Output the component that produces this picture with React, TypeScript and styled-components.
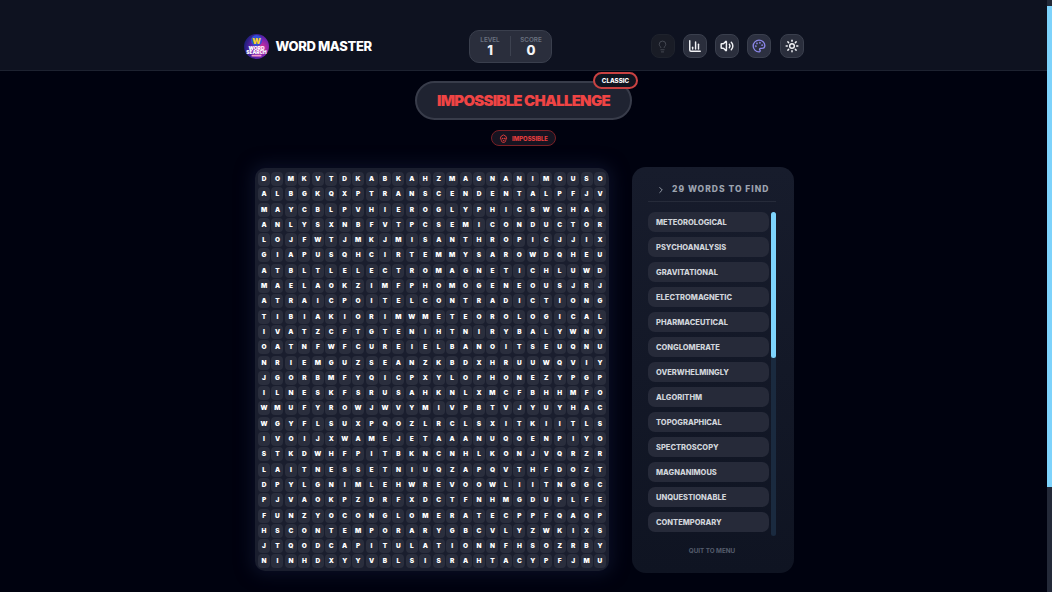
import React from "react";
import styled, { createGlobalStyle } from "styled-components";
import { ChartColumn, ChevronRight, Lightbulb, Palette, Skull, Sun, Volume2 } from "lucide-react";

const ROWS = [
  "DOMKVTDKABKAHZMAGNANIMOUSO",
  "ALBGKQXPTRANSCENDENTALPFJV",
  "MAYCBLPVHIEROGLYPHICSWCHAA",
  "ANLYSXNBFVTPCSEMICONDUCTOR",
  "LOJFWTJMKJMISANTHROPICJJIX",
  "GIAPUSQHCIRTEMMYSAROWDQHEU",
  "ATBLTLELECTROMAGNETICHLUWD",
  "MAELAOKZIMFPHOMOGENEOUSJRJ",
  "ATRAICPOITELCONTRADICTIONG",
  "TIBIAKIORIMWMETEOROLOGICAL",
  "IVATZCFTGTENIHTNIRYBALYWNV",
  "OATNFWFCUREIELBANOITSEUQNU",
  "NRIEMGUZSEANZKBDXHRUUWQVIY",
  "JGORBMFYQICPXYLOPHONEZYPGP",
  "ILNESKFSRUSAHKNLXMCFBHHMFO",
  "WMUFYROWJWVYMIVPBTVJYUYHAC",
  "WGYFLSUXPQOZLRCLSXITKIITLS",
  "IVOIJXWAMEJETAAANUQOENPIYO",
  "STKDWHFPITBKNCNHLKONJVQRZR",
  "LAITNESSETNIUQZAPQVTHFDOZT",
  "DPYLGNIMLEHWREVOOWLIITNGGC",
  "PJVAOKPZDRFXDCTFNHMGDUPLFE",
  "FUNZYOCONGLOMERATECPPFQAQP",
  "HSCONTEMPORARYGBCVLYZWKIXS",
  "JTQODCAPITULATIONNFHSOZRBY",
  "NINHDXYYVBLSISRAHTACYPFJMU",
];

const WORDS = [
  "METEOROLOGICAL",
  "PSYCHOANALYSIS",
  "GRAVITATIONAL",
  "ELECTROMAGNETIC",
  "PHARMACEUTICAL",
  "CONGLOMERATE",
  "OVERWHELMINGLY",
  "ALGORITHM",
  "TOPOGRAPHICAL",
  "SPECTROSCOPY",
  "MAGNANIMOUS",
  "UNQUESTIONABLE",
  "CONTEMPORARY",
  "TRANSCENDENTAL",
  "HIEROGLYPHICS",
  "SEMICONDUCTOR",
  "MISANTHROPIC",
  "HOMOGENEOUS",
  "CONTRADICTION",
  "XYLOPHONE",
  "CAPITULATION",
  "ANTHROPOLOGY",
  "METAMORPHOSIS",
  "LABYRINTHINE",
  "QUINTESSENTIAL",
  "PHOTOSYNTHESIS",
  "ARCHAEOLOGICAL",
  "PSEUDONYMOUS",
  "EXTRAORDINARY",
];

export default function App() {
  return (
    <Page>
      <GlobalStyle />
      <Header>
        <HeaderInner>
          <Brand>
            <Logo />
            <BrandName>WORD MASTER</BrandName>
          </Brand>
          <Stats>
            <Stat>
              <StatLabel>LEVEL</StatLabel>
              <StatValue>1</StatValue>
            </Stat>
            <StatDivider />
            <Stat>
              <StatLabel>SCORE</StatLabel>
              <StatValue>0</StatValue>
            </Stat>
          </Stats>
          <Tools>
            <ToolButton $muted>
              <Lightbulb size={13} strokeWidth={1.6} />
            </ToolButton>
            <ToolButton>
              <ChartColumn size={14} strokeWidth={2.5} />
            </ToolButton>
            <ToolButton>
              <Volume2 size={14} strokeWidth={2.5} />
            </ToolButton>
            <ToolButton $accent>
              <Palette size={14} strokeWidth={2.3} />
            </ToolButton>
            <ToolButton>
              <Sun size={14} strokeWidth={2.5} />
            </ToolButton>
          </Tools>
        </HeaderInner>
      </Header>

      <Main>
        <TitlePill>
          <Title>IMPOSSIBLE CHALLENGE</Title>
          <ModeBadge>CLASSIC</ModeBadge>
        </TitlePill>
        <Difficulty>
          <Skull size={9} strokeWidth={2.4} />
          IMPOSSIBLE
        </Difficulty>

        <Game>
          <Board>
            {ROWS.map((row, r) =>
              row.split("").map((letter, c) => <Cell key={`${r}-${c}`}>{letter}</Cell>)
            )}
          </Board>

          <Sidebar>
            <SidebarHead>
              <ChevronRight size={10} strokeWidth={2.2} />
              <SidebarTitle>29 WORDS TO FIND</SidebarTitle>
            </SidebarHead>
            <WordPane>
              <WordList>
                {WORDS.map((word) => (
                  <Word key={word}>{word}</Word>
                ))}
              </WordList>
              <ListTrack>
                <ListThumb />
              </ListTrack>
            </WordPane>
            <QuitButton>QUIT TO MENU</QuitButton>
          </Sidebar>
        </Game>
      </Main>

      <PageTrack>
        <PageThumb />
      </PageTrack>
    </Page>
  );
}

function Logo() {
  return (
    <LogoSvg viewBox="0 0 50 50">
      <defs>
        <radialGradient id="logoBg" cx="0.7" cy="0.55" r="0.7">
          <stop offset="0" stopColor="#e0309c" />
          <stop offset="0.55" stopColor="#6a22b0" />
          <stop offset="1" stopColor="#1c1f78" />
        </radialGradient>
      </defs>
      <circle cx="25" cy="25" r="25" fill="url(#logoBg)" />
      <circle cx="25" cy="13" r="11" fill="#2f4fd8" />
      <LogoText x="25" y="19" fontSize="16" fill="#f8cf2c">W</LogoText>
      <LogoText x="25" y="31" fontSize="10" fill="#fff">WORD</LogoText>
      <LogoText x="25" y="39" fontSize="9.6" fill="#fff">SEARCH</LogoText>
      <rect x="15" y="41.5" width="20" height="3.5" rx="1.75" fill="#f59ac8" />
    </LogoSvg>
  );
}

const GlobalStyle = createGlobalStyle`
  html {
    background: #00020f;
  }

  body {
    margin: 0;
    background: #00020f;
    font-family: Inter, "Liberation Sans", sans-serif;
  }
`;

const Page = styled.div`
  position: relative;
  height: 592px;
  padding-right: 5px;
  overflow: hidden;
`;

const PageTrack = styled.div`
  position: absolute;
  top: 0;
  right: 0;
  bottom: 0;
  width: 5px;
  padding-top: 6px;
  box-sizing: border-box;
  background: #232938;
`;

const PageThumb = styled.div`
  height: 481px;
  background: #7dd3fc;
`;

const Header = styled.header`
  height: 70px;
  background: #0e1220;
  border-bottom: 1px solid #1d2230;
`;

const HeaderInner = styled.div`
  width: 560px;
  height: 100%;
  margin: 0 auto;
  padding-top: 22px;
  box-sizing: border-box;
  display: flex;
  align-items: center;
  justify-content: space-between;
`;

const Brand = styled.div`
  display: flex;
  align-items: center;
  gap: 7px;
  width: 213px;
`;

const LogoSvg = styled.svg`
  width: 25px;
  height: 25px;
`;

const LogoText = styled.text`
  font-family: Inter, sans-serif;
  font-weight: 900;
  text-anchor: middle;
`;

const BrandName = styled.span`
  color: #fff;
  font-size: 13px;
  font-weight: 800;
  letter-spacing: -0.35px;
`;

const Stats = styled.div`
  width: 83px;
  height: 33px;
  box-sizing: border-box;
  display: flex;
  align-items: center;
  background: #2a2e3c;
  border: 1px solid #3a3f4d;
  border-radius: 10px;
`;

const Stat = styled.div`
  flex: 1;
  display: flex;
  flex-direction: column;
  align-items: center;
`;

const StatLabel = styled.span`
  color: #6b7280;
  font-size: 6.3px;
  font-weight: 600;
  line-height: 8px;
`;

const StatValue = styled.span`
  color: #f3f4f6;
  font-size: 13px;
  font-weight: 800;
  line-height: 13px;
`;

const StatDivider = styled.div`
  width: 1px;
  height: 20px;
  background: #3d4250;
`;

const Tools = styled.div`
  width: 239px;
  display: flex;
  justify-content: flex-end;
  gap: 8.2px;
`;

const ToolButton = styled.button<{ $muted?: boolean; $accent?: boolean }>`
  width: 24px;
  height: 24px;
  padding: 0;
  display: flex;
  align-items: center;
  justify-content: center;
  border-radius: 8px;
  border: 1px solid ${(p) => (p.$muted ? "#1e222c" : "#3a3f4d")};
  background: ${(p) => (p.$muted ? "#191c26" : p.$accent ? "#2c3040" : "#2a2e3c")};
  color: ${(p) => (p.$muted ? "#4b4f59" : p.$accent ? "#8b86e8" : "#f1f2f5")};
`;

const Main = styled.main`
  display: flex;
  flex-direction: column;
  align-items: center;
  padding-top: 10px;
`;

const TitlePill = styled.div`
  position: relative;
  width: 217px;
  height: 39px;
  box-sizing: border-box;
  display: flex;
  align-items: center;
  justify-content: center;
  background: #1f2331;
  border: 2px solid #383c4a;
  border-radius: 20px;
`;

const Title = styled.h1`
  margin: 0;
  color: #ef4444;
  font-size: 15px;
  font-weight: 900;
  letter-spacing: -0.75px;
  white-space: nowrap;
`;

const ModeBadge = styled.span`
  position: absolute;
  top: -11px;
  right: -8px;
  width: 45px;
  height: 17px;
  box-sizing: border-box;
  display: flex;
  align-items: center;
  justify-content: center;
  background: #10141f;
  border: 2px solid #c94242;
  border-radius: 9px;
  color: #fff;
  font-size: 6.2px;
  font-weight: 800;
`;

const Difficulty = styled.div`
  width: 65px;
  height: 16px;
  margin-top: 10px;
  box-sizing: border-box;
  display: flex;
  align-items: center;
  justify-content: center;
  gap: 4px;
  background: #161421;
  border: 1px solid #7a2026;
  border-radius: 8px;
  color: #e53e3e;
  font-size: 5.9px;
  font-weight: 800;
`;

const Game = styled.div`
  display: flex;
  align-items: flex-start;
  gap: 23px;
  margin-top: 21px;
  padding-left: 2px;
`;

const Board = styled.div`
  width: 354px;
  margin-top: 1px;
  padding: 4px 3px 3px;
  box-sizing: border-box;
  display: grid;
  grid-template-columns: repeat(26, 12.05px);
  grid-auto-rows: 14px;
  gap: 1.3px 1.4px;
  background: #1a1e2e;
  border-radius: 10px;
  box-shadow: 0 0 16px 4px #0a0f25;
`;

const Cell = styled.div`
  display: flex;
  align-items: center;
  justify-content: center;
  background: #2a2e3d;
  border-radius: 4px;
  color: #fff;
  font-size: 6.5px;
  font-weight: 900;
`;

const Sidebar = styled.aside`
  width: 162px;
  height: 406px;
  padding: 0 18px 0 16px;
  box-sizing: border-box;
  display: flex;
  flex-direction: column;
  background: linear-gradient(180deg, #171c2c, #0f1422);
  border-radius: 14px;
`;

const SidebarHead = styled.div`
  height: 35px;
  margin-bottom: 10px;
  padding: 0 0 6px 8px;
  box-sizing: border-box;
  display: flex;
  align-items: flex-end;
  gap: 6px;
  color: #9ca3af;
  border-bottom: 1px solid #262b3a;
`;

const SidebarTitle = styled.span`
  color: #9ca3af;
  font-size: 8.5px;
  font-weight: 800;
  line-height: 11px;
  letter-spacing: 1px;
  white-space: nowrap;
`;

const WordPane = styled.div`
  position: relative;
  height: 324px;
`;

const WordList = styled.ul`
  width: 121px;
  height: 100%;
  margin: 0;
  padding: 0;
  list-style: none;
  overflow: hidden;
`;

const ListTrack = styled.div`
  position: absolute;
  top: 0;
  right: 0;
  bottom: 0;
  width: 5px;
  background: #1a2a3f;
  border-radius: 3px;
`;

const ListThumb = styled.div`
  height: 146px;
  background: #7dd3fc;
  border-radius: 3px;
`;

const Word = styled.li`
  height: 20px;
  margin-bottom: 5px;
  padding-left: 8px;
  display: flex;
  align-items: center;
  background: #262a39;
  border-radius: 7px;
  color: #d1d5db;
  font-size: 7.5px;
  font-weight: 800;
`;

const QuitButton = styled.button`
  flex: 1;
  padding: 0 0 8px;
  background: none;
  border: none;
  color: #555d6d;
  font-family: inherit;
  font-size: 6.3px;
  font-weight: 700;
`;
